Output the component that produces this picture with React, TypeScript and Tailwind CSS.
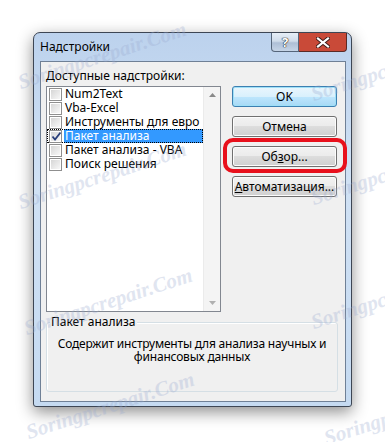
import React from "react";

const items = [
  { label: "Num2Text", checked: false },
  { label: "Vba-Excel", checked: false },
  { label: "Инструменты для евро", checked: false },
  { label: "Пакет анализа", checked: true, selected: true },
  { label: "Пакет анализа - VBA", checked: false },
  { label: "Поиск решения", checked: false },
];

function Checkbox({ checked }: { checked: boolean }) {
  return (
    <div className="relative w-[13px] h-[13px] shrink-0 border border-[#8f8f8f] bg-white p-[1px]">
      <div className="w-full h-full bg-[#e8e8e8] bg-[linear-gradient(135deg,#d6d6d6,#f7f7f7)]" />
      {checked && (
        <svg className="absolute left-[1px] top-[0px]" width="11" height="11" viewBox="0 0 11 11">
          <path d="M1.5 5.5 L4 8.5 L9.5 1.5" fill="none" stroke="#2a3f7a" strokeWidth="1.8" />
        </svg>
      )}
    </div>
  );
}

function Btn({ children, def }: { children: React.ReactNode; def?: boolean }) {
  return (
    <div
      className={
        "w-[105px] h-[21px] rounded-[3px] border flex items-center justify-center text-[12px] text-black " +
        (def
          ? "border-[#3c7fb1] shadow-[inset_0_0_0_1px_#9fe0f7] bg-[#d4eefc] bg-[linear-gradient(#eaf6fd,#d9f0fc_50%,#bee6fd_50%,#a7d9f5)]"
          : "border-[#707070] shadow-[inset_0_0_0_1px_#fcfcfc] bg-[#e6e6e6] bg-[linear-gradient(#f2f2f2,#ebebeb_50%,#dddddd_50%,#cfcfcf)]")
      }
    >
      {children}
    </div>
  );
}

function Watermark({ x, y }: { x: number; y: number }) {
  return (
    <div
      className="absolute pointer-events-none whitespace-nowrap italic font-bold text-[21px] leading-none text-[#9aaad0] opacity-30"
      style={{
        left: x,
        top: y,
        fontFamily: '"Liberation Serif", serif',
        transform: "rotate(-18deg)",
        transformOrigin: "0 100%",
      }}
    >
      Soringpcrepair.Com
    </div>
  );
}

export default function App() {
  return (
    <div
      className="relative w-[385px] h-[442px] bg-white overflow-hidden pt-[32px] pl-[33px]"
      style={{ fontFamily: '"Noto Sans", "Open Sans", sans-serif' }}
    >
      <div className="w-[319px] h-[375px] rounded-t-[7px] rounded-b-[3px] border border-[#3d4654] bg-[#c8dcf2] bg-[linear-gradient(#bcd2ed,#d0e1f4_40%,#c5daf1)] shadow-[0_5px_16px_rgba(0,0,0,0.45)] flex flex-col">
        <div className="h-[28px] flex items-start justify-between pl-[6px] pr-[4px]">
          <div className="pt-[6px] text-[12px] leading-[16px] text-black">Надстройки</div>
          <div className="flex">
            <div className="w-[28px] h-[19px] rounded-bl-[4px] border border-t-0 border-[#55657a] bg-[#c3d2e4] bg-[linear-gradient(#e6eef7,#d0dcea_45%,#aebfd6_55%,#c6d5e7)] flex items-center justify-center">
              <span className="text-[13px] font-bold leading-none text-white [text-shadow:0_0_1px_#222,0_0_1px_#222,0_0_1px_#222]">?</span>
            </div>
            <div className="w-[48px] h-[19px] rounded-br-[4px] border border-l-0 border-t-0 border-[#5a2a26] bg-[#c94a38] flex items-center justify-center">
              <svg width="14" height="11" viewBox="0 0 14 11">
                <path d="M2 1.5 L12 9.5 M12 1.5 L2 9.5" stroke="#3a1a16" strokeWidth="4" strokeLinecap="square" />
                <path d="M2 1.5 L12 9.5 M12 1.5 L2 9.5" stroke="#ffffff" strokeWidth="2.2" strokeLinecap="square" />
              </svg>
            </div>
          </div>
        </div>
        <div className="ml-[6px] mr-[5px] h-[341px] border border-[#6f8096] bg-[#f0f0f0] pt-[7px] pl-[5px] flex flex-col">
          <div className="text-[12px] leading-[14px] text-black">
            <span className="underline">Д</span>оступные надстройки:
          </div>
          <div className="mt-[3px] flex items-start gap-[11px]">
            <div className="w-[175px] h-[226px] border border-[#828790] bg-white flex">
              <div className="flex-1 flex flex-col">
                {items.map((it) => (
                  <div
                    key={it.label}
                    className={
                      "h-[14px] flex items-center pl-[1px] " +
                      (it.selected ? "[outline:1px_dotted_#000] [outline-offset:-1px]" : "")
                    }
                  >
                    <div className="ml-[1px]">
                      <Checkbox checked={it.checked} />
                    </div>
                    <div
                      className={
                        "ml-[2px] flex-1 h-[14px] pl-[1px] text-[12px] leading-[14px] " +
                        (it.selected ? "bg-[#3399ff] text-white" : "text-black")
                      }
                    >
                      {it.label}
                    </div>
                  </div>
                ))}
              </div>
              <div className="w-[17px] h-full bg-[#f4f4f4] border-l border-[#ebebeb] flex flex-col justify-between items-center py-[6px]">
                <svg width="7" height="4" viewBox="0 0 7 4">
                  <path d="M0 4 L3.5 0 L7 4 Z" fill="#8a8a8a" />
                </svg>
                <svg width="7" height="4" viewBox="0 0 7 4">
                  <path d="M0 0 L3.5 4 L7 0 Z" fill="#b0b0b0" />
                </svg>
              </div>
            </div>
            <div className="relative flex flex-col gap-[9px]">
              <Btn def>OK</Btn>
              <Btn>Отмена</Btn>
              <Btn>
                Об<span className="underline">з</span>ор...
              </Btn>
              <Btn>
                <span className="underline">А</span>втоматизация...
              </Btn>
              <div className="absolute left-[-9px] top-[52px] w-[124px] h-[35px] rounded-[10px] border-[4px] border-[#e8101c]" />
            </div>
          </div>
          <div className="relative mt-[10px] w-[292px] h-[70px] rounded-[3px] border border-[#d5dfe5] shadow-[inset_1px_1px_0_#ffffff]">
            <div className="absolute -top-[8px] left-[3px] px-[1px] bg-[#f0f0f0] text-[12px] leading-[14px] text-black">
              Пакет анализа
            </div>
            <div className="pt-[14px] text-center text-[12px] leading-[13px] tracking-[-0.2px] text-black">
              Содержит инструменты для анализа научных и
              <br />
              финансовых данных
            </div>
          </div>
        </div>
      </div>
      <Watermark x={22} y={72} />
      <Watermark x={22} y={192} />
      <Watermark x={28} y={318} />
      <Watermark x={30} y={422} />
      <Watermark x={315} y={84} />
      <Watermark x={315} y={188} />
      <Watermark x={315} y={312} />
      <Watermark x={328} y={428} />
    </div>
  );
}
